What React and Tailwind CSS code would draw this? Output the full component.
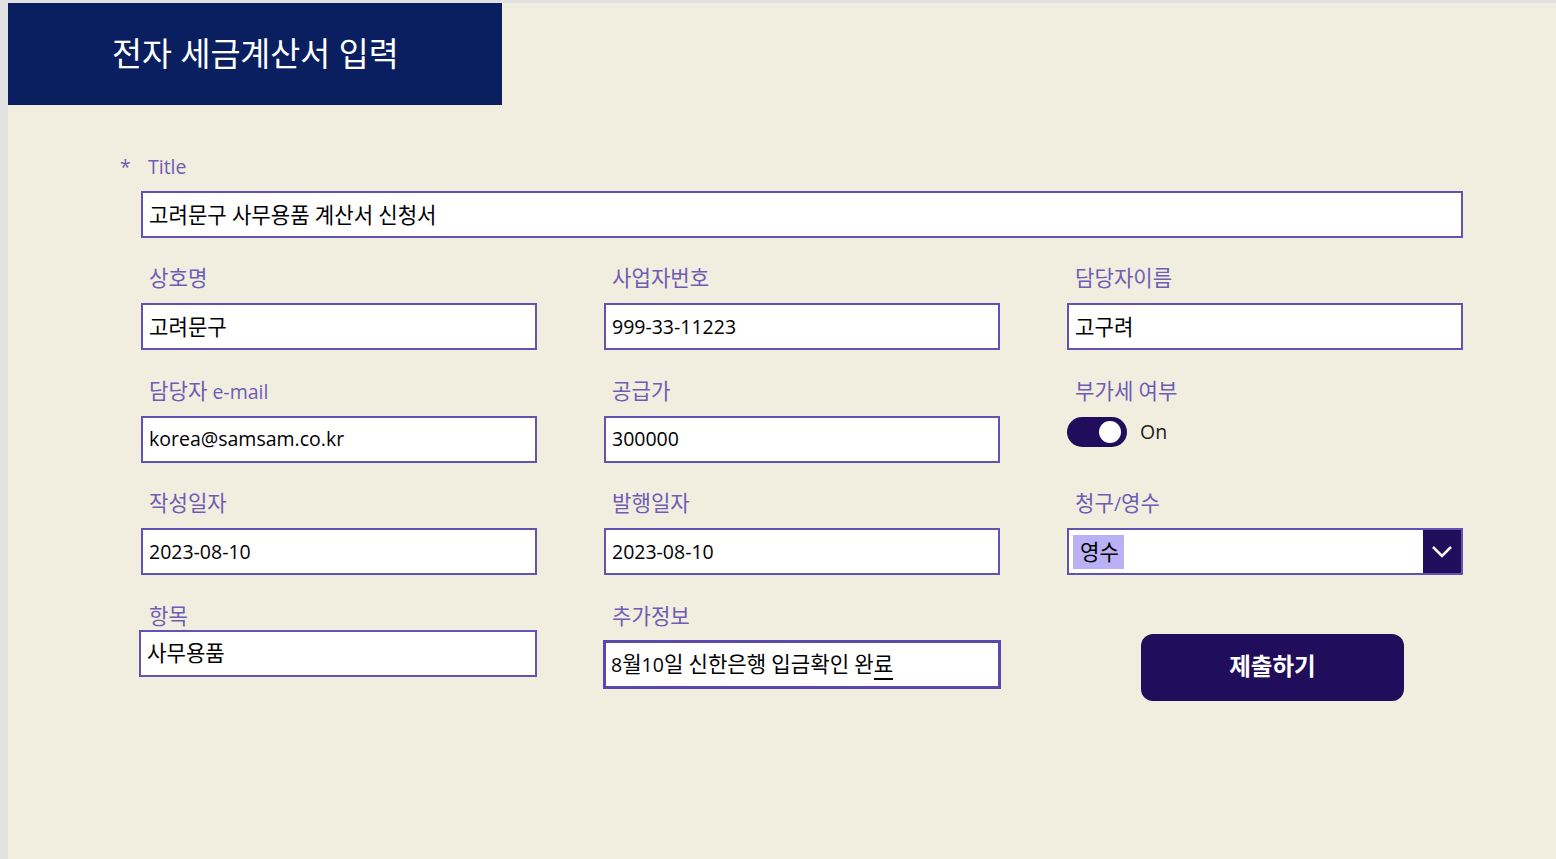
import React from "react";

const font = { fontFamily: '"Open Sans", "Noto Sans CJK KR", sans-serif' };

function K({ text }) {
  const parts = text.split(/([\u1100-\u11FF\u3130-\u318F\uAC00-\uD7AF]+)/);
  return (
    <span className="whitespace-pre">
      {parts.map((p, i) =>
        /[\u1100-\u11FF\u3130-\u318F\uAC00-\uD7AF]/.test(p) ? (
          <span key={i} className="text-[1.085em]">
            {p}
          </span>
        ) : (
          <span key={i}>{p}</span>
        )
      )}
    </span>
  );
}

function Label({ children, className = "" }) {
  return (
    <div className={"h-[24px] whitespace-nowrap pl-[8px] text-[19.5px] leading-[24px] text-[#6d5db6] " + className}>
      <K text={children} />
    </div>
  );
}

function Input({ value, className = "" }) {
  return (
    <div className={"flex h-[47px] items-center whitespace-nowrap border-2 border-[#6252b2] bg-white pl-[6px] text-[19.5px] text-black " + className}>
      <K text={value} />
    </div>
  );
}

function Field({ label, value }) {
  return (
    <div className="flex flex-col">
      <Label>{label}</Label>
      <Input value={value} className="mt-[13px]" />
    </div>
  );
}

export default function App() {
  return (
    <div style={font} className="flex h-[859px] w-full flex-col bg-[#e1e1e1] pl-[8px] pt-[3px]">
      <div className="flex flex-1 flex-col bg-[#f2eedf]">
        <div className="flex h-[102px] w-[494px] items-center bg-[#0a1f60] pl-[104px] text-[32.6px] text-white">
          전자 세금계산서 입력
        </div>

        <div className="ml-[133px] mt-[50px] w-[1322px]">
          <div className="relative h-[24px] pl-[7px] text-[19.5px] leading-[24px] text-[#6d5db6]">
            <span className="absolute left-[-21px] top-0">*</span>
            Title
          </div>
          <Input value="고려문구 사무용품 계산서 신청서" className="mt-[12px]" />

          <div className="mt-[28px] grid grid-cols-[396px_396px_396px] gap-x-[67px] gap-y-[28.5px]">
            <Field label="상호명" value="고려문구" />
            <Field label="사업자번호" value="999-33-11223" />
            <Field label="담당자이름" value="고구려" />

            <Field label="담당자 e-mail" value="korea@samsam.co.kr" />
            <Field label="공급가" value="300000" />
            <div className="flex flex-col">
              <Label>부가세 여부</Label>
              <div className="mt-[14px] flex items-center">
                <div className="flex h-[30px] w-[60px] items-center justify-end rounded-full bg-[#200d5c] pr-[6px]">
                  <div className="h-[22px] w-[22px] rounded-full bg-white" />
                </div>
                <span className="ml-[13px] text-[19.5px] text-[#1b1b1b]">On</span>
              </div>
            </div>

            <Field label="작성일자" value="2023-08-10" />
            <Field label="발행일자" value="2023-08-10" />
            <div className="flex flex-col">
              <Label>청구/영수</Label>
              <div className="mt-[13px] flex h-[47px] items-stretch border-2 border-[#6252b2] bg-white">
                <div className="flex flex-1 items-center pl-[4px]">
                  <div className="flex h-[34px] w-[51px] items-center bg-[#b9b0f5] pl-[7px] text-[19.5px] text-black">
                    <K text="영수" />
                  </div>
                </div>
                <div className="flex w-[38px] items-center justify-center bg-[#200d5c]">
                  <svg width="22" height="14" viewBox="0 0 22 14" fill="none">
                    <path d="M2 2 L11 11 L20 2" stroke="white" strokeWidth="2.5" />
                  </svg>
                </div>
              </div>
            </div>

            <div className="flex flex-col">
              <Label>항목</Label>
              <div className="ml-[-2px] mt-[2px] flex h-[47px] items-center border-2 border-[#6252b2] bg-white pl-[6px] text-[19.5px] text-black">
                <K text="사무용품" />
              </div>
            </div>
            <div className="flex flex-col">
              <Label>추가정보</Label>
              <div className="ml-[-1px] mr-[-1px] mt-[12px] flex h-[49px] items-center whitespace-nowrap border-[3px] border-[#5a48ac] bg-white pl-[5px] text-[19.5px] text-black">
                <span className="whitespace-pre">
                  <K text="8월10일 신한은행 입금확인 완" />
                  <span className="border-b-2 border-black text-[1.085em]">료</span>
                </span>
              </div>
            </div>
            <div className="flex flex-col">
              <button className="ml-[74px] mt-[30px] flex h-[67px] w-[263px] items-center justify-center rounded-[12px] bg-[#200d5c] text-[23.5px] font-bold text-white">
                제출하기
              </button>
            </div>
          </div>
        </div>
      </div>
    </div>
  );
}
